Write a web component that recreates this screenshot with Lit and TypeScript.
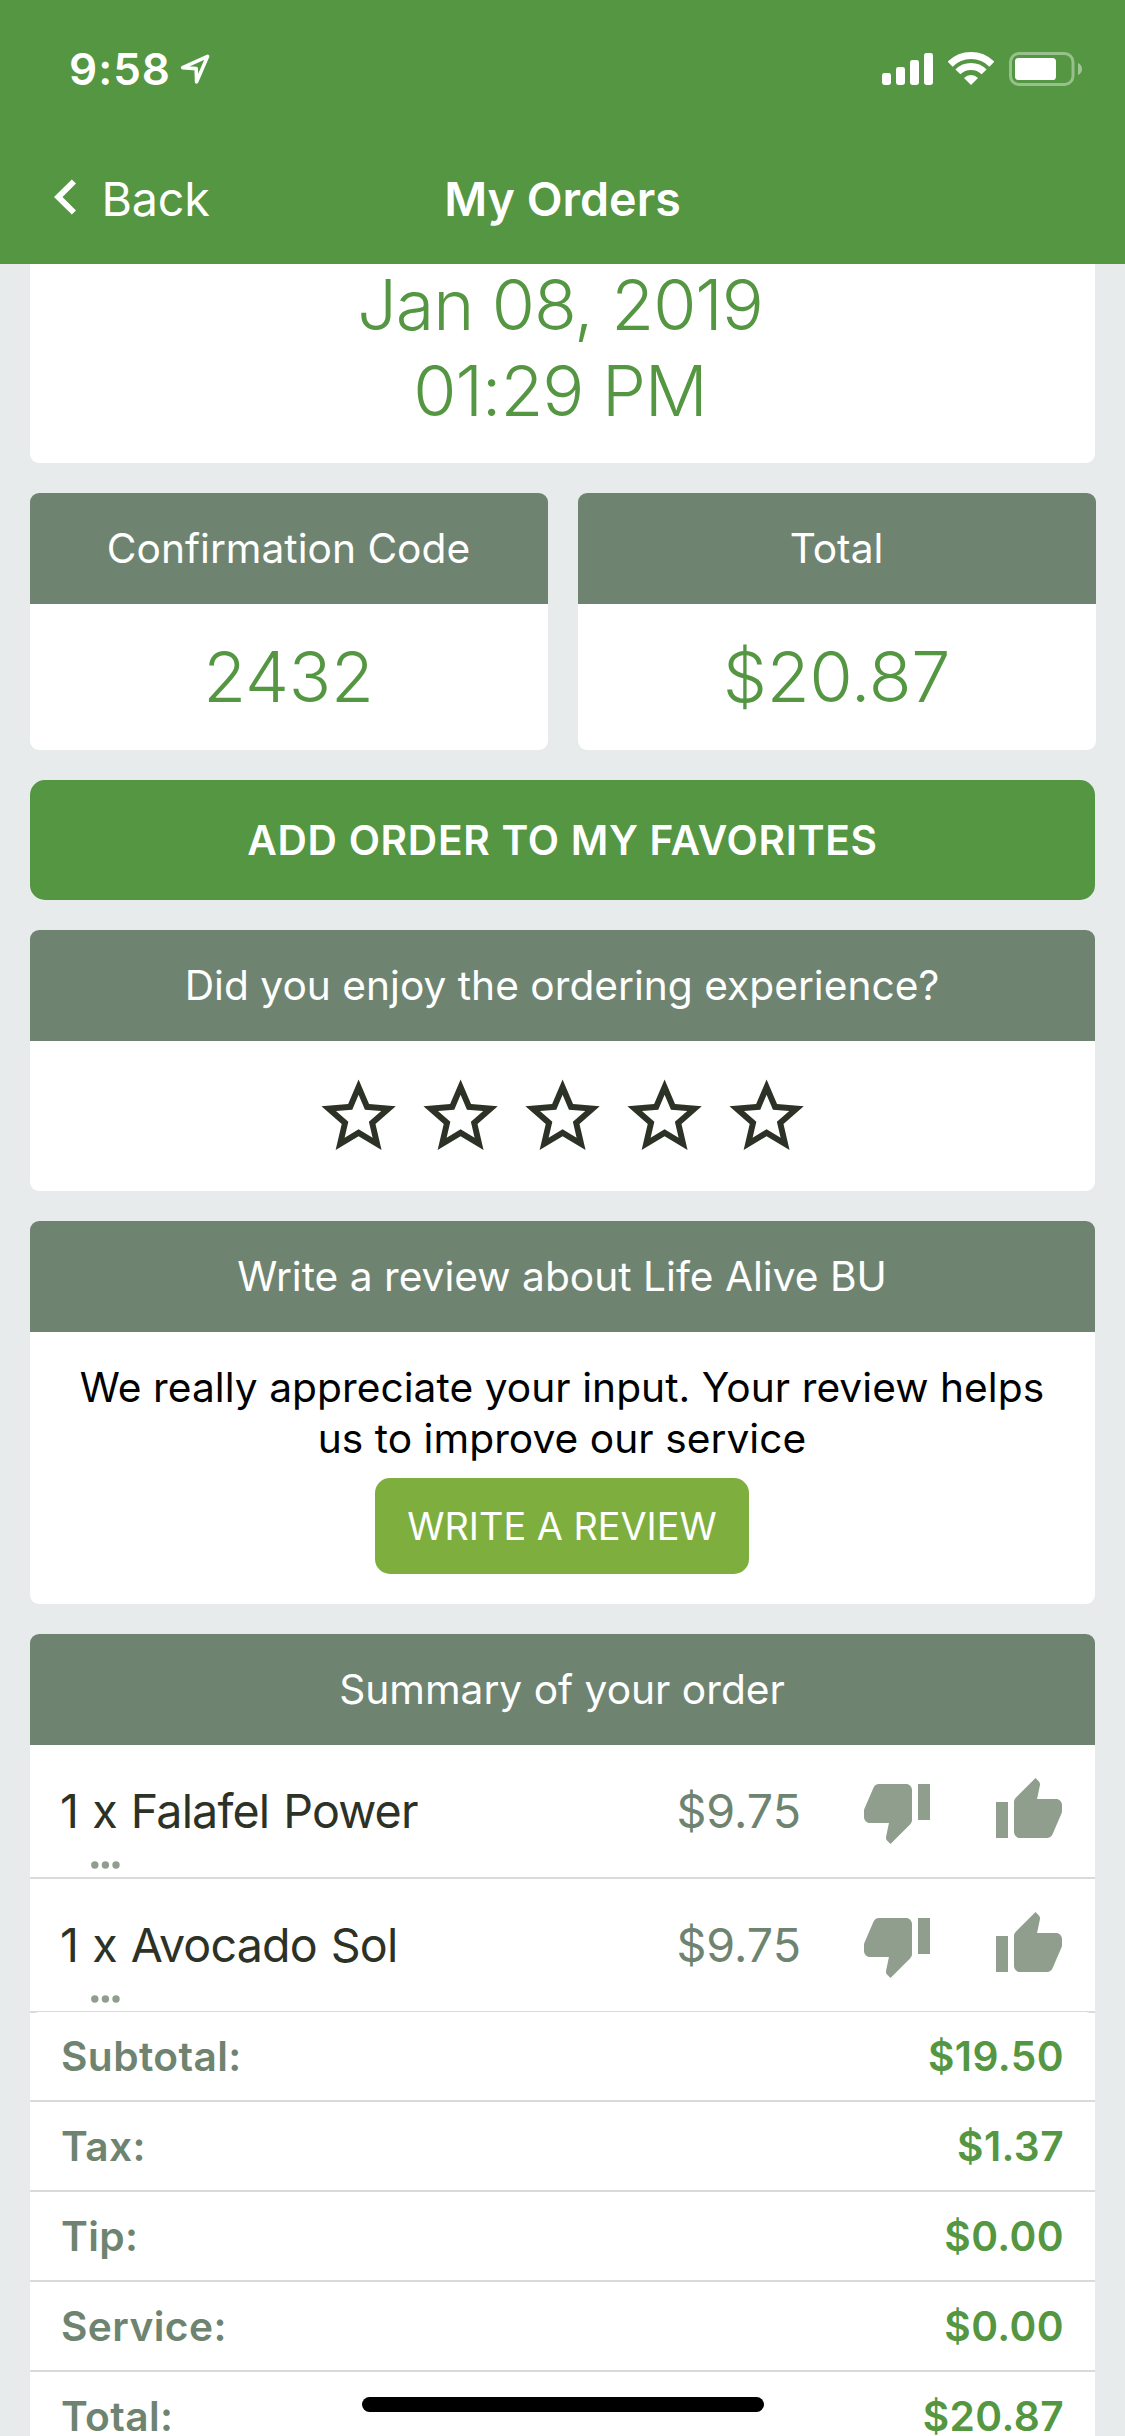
import { LitElement, html, css, svg } from "lit";
import { customElement, property } from "lit/decorators.js";

interface OrderItem {
  qty: number;
  name: string;
  price: string;
}

interface AmountLine {
  label: string;
  amount: string;
}

const ITEMS: OrderItem[] = [
  { qty: 1, name: "Falafel Power", price: "$9.75" },
  { qty: 1, name: "Avocado Sol", price: "$9.75" },
];

const AMOUNTS: AmountLine[] = [
  { label: "Subtotal:", amount: "$19.50" },
  { label: "Tax:", amount: "$1.37" },
  { label: "Tip:", amount: "$0.00" },
  { label: "Service:", amount: "$0.00" },
  { label: "Total:", amount: "$20.87" },
];

const thumbDown = svg`<path d="M15 3H6c-.83 0-1.54.5-1.84 1.22l-3.02 7.05c-.09.23-.14.47-.14.73v2c0 1.1.9 2 2 2h6.31l-.95 4.57-.03.32c0 .41.17.79.44 1.06L9.83 23l6.59-6.59c.36-.36.58-.86.58-1.41V5c0-1.1-.9-2-2-2z"/><path d="M19 3h4v12h-4z"/>`;
const thumbUp = svg`<path d="M1 9h4v12H1z"/><path d="M23 10c0-1.1-.9-2-2-2h-6.31l.95-4.57.03-.32c0-.41-.17-.79-.44-1.06L14.17 1 7.59 7.59C7.22 7.95 7 8.45 7 9v10c0 1.1.9 2 2 2h9c.83 0 1.54-.5 1.84-1.22l3.02-7.05c.09-.23.14-.47.14-.73v-2z"/>`;

/** Green bar with the phone status line and the navigation line. */
@customElement("top-bar")
export class TopBar extends LitElement {
  static styles = css`
    :host {
      display: block;
      height: 264px;
      background: #549641;
      color: #fff;
    }
    .status {
      display: flex;
      align-items: center;
      height: 138px;
      padding: 0 43px 0 69px;
      box-sizing: border-box;
    }
    .time {
      font-size: 44px;
      font-weight: 600;
      letter-spacing: 1px;
      line-height: 60px;
    }
    .arrow {
      margin-left: 8px;
    }
    .radios {
      display: flex;
      margin-left: auto;
    }
    .wifi {
      margin-left: 15px;
    }
    .battery {
      margin-left: 15px;
    }
    svg {
      display: block;
    }
    .nav {
      display: grid;
      grid-template-columns: 1fr auto 1fr;
      align-items: center;
      height: 122px;
      padding: 0 54px;
    }
    .back {
      display: flex;
      align-items: center;
      gap: 25.5px;
      font-size: 46.6px;
      line-height: 122px;
      letter-spacing: -0.2px;
    }
    .chevron {
      margin-top: -5px;
    }
    .title {
      font-size: 46.6px;
      line-height: 122px;
      font-weight: 600;
    }
  `;

  render() {
    return html`
      <div class="status">
        <span class="time">9:58</span>
        <svg class="arrow" width="32" height="32" viewBox="0 0 32 32">
          <path d="M28.600 3.400 3.600 14.600 17.200 15.600 17.600 28.900Z" fill="none" stroke="#fff" stroke-width="3.600" stroke-linejoin="round" />
        </svg>
        <div class="radios">
          <svg width="51" height="34" viewBox="0 0 51 34" fill="#fff">
            <rect x="0" y="21" width="9" height="12" rx="2.4" />
            <rect x="14" y="15" width="9" height="18" rx="2.4" />
            <rect x="28" y="8" width="9" height="25" rx="2.4" />
            <rect x="42" y="1" width="9" height="32" rx="2.4" />
          </svg>
          <svg class="wifi" width="46" height="34" viewBox="0 0 46 34" fill="none" stroke="#fff">
            <path d="M2.1 12.2a29.5 29.5 0 0 1 41.8 0" stroke-width="7" />
            <path d="M9.9 19.9a18.5 18.5 0 0 1 26.2 0" stroke-width="7" />
            <path d="M23 33 16 26a9.9 9.9 0 0 1 14 0Z" fill="#fff" stroke="none" />
          </svg>
          <svg class="battery" width="73" height="34" viewBox="0 0 73 34">
            <rect x="1.5" y="1.5" width="62.5" height="31" rx="8.5" fill="none" stroke="#fff" stroke-opacity=".4" stroke-width="3" />
            <rect x="6" y="6" width="41" height="22" rx="3.6" fill="#fff" />
            <path d="M69 11c2.6 1.2 4 3.3 4 6s-1.4 4.8-4 6Z" fill="#fff" fill-opacity=".45" />
          </svg>
        </div>
      </div>
      <div class="nav">
        <div class="back">
          <svg class="chevron" width="22" height="36" viewBox="0 0 22 36">
            <path d="M0 18 17.8.4 22 4.4 8.5 18 22 31.6 17.8 35.6Z" fill="#fff" />
          </svg>
          <span>Back</span>
        </div>
        <div class="title">My Orders</div>
      </div>
    `;
  }
}

/** White rounded panel with a grey-green heading. */
@customElement("info-card")
export class InfoCard extends LitElement {
  @property() heading = "";

  static styles = css`
    :host {
      display: block;
      background: #fff;
      border-radius: 9px;
      overflow: hidden;
    }
    .heading {
      padding-right: 1px;
      background: #6e8471;
      color: #fff;
      text-align: center;
      font-size: 40.7px;
      line-height: 111px;
      height: 111px;
    }
  `;

  render() {
    return html`<div class="heading">${this.heading}</div>
      <slot></slot>`;
  }
}

@customElement("app-root")
export class AppRoot extends LitElement {
  static styles = css`
    :host {
      display: block;
      position: relative;
      width: 1125px;
      height: 2436px;
      overflow: hidden;
      background: #e7ebec;
      font-family: Inter, "Liberation Sans", sans-serif;
    }
    svg {
      display: block;
    }
    .page {
      display: flex;
      flex-direction: column;
      gap: 30px;
      padding: 0 30px;
    }
    .date {
      height: 199px;
      box-sizing: border-box;
      padding-right: 5px;
      background: #fff;
      border-radius: 0 0 9px 9px;
      color: #549641;
      font-size: 70px;
      font-weight: 300;
      line-height: 86px;
      letter-spacing: -1.1px;
      text-align: center;
    }
    .date-lines {
      margin-top: -2px;
    }
    .pair {
      display: grid;
      grid-template-columns: 518px 518px;
      gap: 30px;
      margin-right: -1px;
    }
    .value {
      height: 146px;
      line-height: 146px;
      padding-right: 1px;
      font-size: 70px;
      font-weight: 300;
      letter-spacing: -0.2px;
      text-align: center;
      color: #549641;
    }
    .favorite {
      height: 120px;
      line-height: 121px;
      border-radius: 15px;
      background: #549641;
      color: #fff;
      text-align: center;
      font-size: 40.7px;
      font-weight: 600;
      letter-spacing: 0.7px;
    }
    .stars {
      display: flex;
      justify-content: center;
      gap: 12.8px;
      height: 150px;
      box-sizing: border-box;
      padding-top: 30.6px;
      padding-left: 1px;
    }
    .review {
      display: flex;
      flex-direction: column;
      align-items: center;
      gap: 14px;
      padding: 30px 45px 30px 44px;
    }
    .review-text {
      font-size: 40.7px;
      line-height: 51px;
      letter-spacing: 0.04px;
      text-align: center;
      color: #000;
    }
    .review-button {
      width: 374px;
      height: 96px;
      line-height: 96px;
      border-radius: 15px;
      background: #7eaf3e;
      color: #fff;
      text-align: center;
      font-size: 37.8px;
    }
    .item {
      display: flex;
      align-items: center;
      gap: 60px;
      height: 132px;
      padding: 0 30px;
      border-bottom: 2px solid #d9dada;
      font-size: 46.6px;
      line-height: 132px;
    }
    .item-name {
      flex: 1;
      height: 132px;
      color: #2d3226;
      letter-spacing: -0.85px;
      word-spacing: 1.8px;
    }
    .more {
      margin: -16px 0 0 30.6px;
    }
    .item-price {
      color: #6e8471;
    }
    .thumb {
      fill: #909e8e;
    }
    .amounts {
      position: relative;
      margin-top: -1px;
      background: #fff;
      border-radius: 9px 9px 0 0;
    }
    .amount {
      display: flex;
      justify-content: space-between;
      height: 88px;
      padding: 0 31px;
      border-bottom: 2px solid #d9dada;
      font-size: 40.7px;
      line-height: 89.6px;
      font-weight: 600;
      letter-spacing: 0.4px;
      color: #6e8471;
    }
    .amount-value {
      color: #549641;
    }
    .home {
      position: absolute;
      left: 362px;
      top: 2397px;
      width: 402px;
      height: 15px;
      border-radius: 7.5px;
      background: #000;
    }
  `;

  private star() {
    return html`<svg width="89.2" height="89.2" viewBox="0 0 24 24" fill="#2d3226">
      <path
        d="M22 9.24l-7.19-.62L12 2 9.19 8.63 2 9.24l5.46 4.73L5.82 21 12 17.27 18.18 21l-1.63-7.03L22 9.24zM12 15.4l-3.76 2.27 1-4.28-3.32-2.88 4.38-.38L12 6.1l1.71 4.04 4.38.38-3.32 2.88 1 4.28L12 15.4z"
      />
    </svg>`;
  }

  private item(entry: OrderItem) {
    return html`<div class="item">
      <div class="item-name">
        ${entry.qty} x ${entry.name}
        <svg class="more" width="30" height="8" viewBox="0 0 30 8" fill="#909e8e">
          <circle cx="3.8" cy="4" r="3.7" />
          <circle cx="14.4" cy="4" r="3.7" />
          <circle cx="25" cy="4" r="3.7" />
        </svg>
      </div>
      <div class="item-price">${entry.price}</div>
      <svg class="thumb" width="72" height="72" viewBox="0 0 24 24">${thumbDown}</svg>
      <svg class="thumb" width="72" height="72" viewBox="0 0 24 24">${thumbUp}</svg>
    </div>`;
  }

  render() {
    return html`
      <top-bar></top-bar>
      <main class="page">
        <div class="date">
          <div class="date-lines">Jan 08, 2019<br />01:29 PM</div>
        </div>
        <div class="pair">
          <info-card heading="Confirmation Code"><div class="value">2432</div></info-card>
          <info-card heading="Total"><div class="value">$20.87</div></info-card>
        </div>
        <div class="favorite">ADD ORDER TO MY FAVORITES</div>
        <info-card heading="Did you enjoy the ordering experience?">
          <div class="stars">${[1, 2, 3, 4, 5].map(() => this.star())}</div>
        </info-card>
        <info-card heading="Write a review about Life Alive BU">
          <div class="review">
            <div class="review-text">We really appreciate your input. Your review helps<br />us to improve our service</div>
            <div class="review-button">WRITE A REVIEW</div>
          </div>
        </info-card>
        <info-card heading="Summary of your order">
          ${ITEMS.map((entry) => this.item(entry))}
          <div class="amounts">
            ${AMOUNTS.map(
              (line) => html`<div class="amount">
                <span>${line.label}</span><span class="amount-value">${line.amount}</span>
              </div>`,
            )}
          </div>
        </info-card>
      </main>
      <div class="home"></div>
    `;
  }
}
